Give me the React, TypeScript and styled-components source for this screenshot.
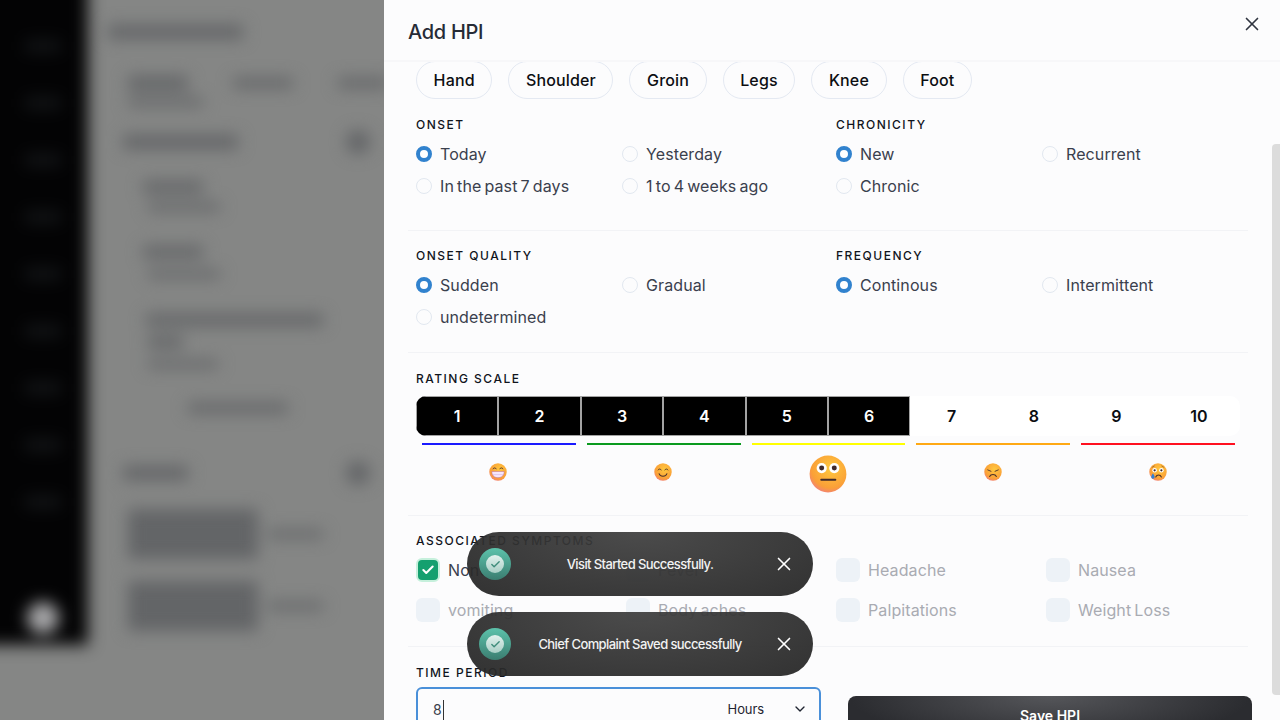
import React from 'react';
import styled, { createGlobalStyle } from 'styled-components';
import { X, ChevronDown, Check } from 'lucide-react';

const GlobalStyle = createGlobalStyle`
  html, body {
    margin: 0;
    height: 100%;
    overflow: hidden;
    background: #858685;
    font-family: 'Inter', 'Liberation Sans', sans-serif;
  }

  * {
    box-sizing: border-box;
  }
`;

// blurred page that sits behind the drawer
const Backdrop = styled.div`
  height: 720px;
  width: 384px;
  overflow: hidden;
  background: #858685;
`;

const BlurLayer = styled.div`
  display: flex;
  width: 440px;
  height: 780px;
  margin: -30px 0 0 -30px;
  filter: blur(8px);
`;

const SideBar = styled.div`
  width: 118px;
  height: 675px;
  flex-shrink: 0;
  background: #030304;
  display: flex;
  flex-direction: column;
  align-items: center;
  padding: 70px 2px 0 30px;
  gap: 45px;
`;

const SideItem = styled.div`
  width: 36px;
  height: 12px;
  background: #131517;
`;

const SideAvatar = styled.div`
  width: 32px;
  height: 32px;
  margin-top: 49px;
  border-radius: 50%;
  background: #a8a8aa;
`;

const Page = styled.div`
  flex: 1;
  padding: 55px 0 0 20px;
  display: flex;
  flex-direction: column;
`;

const GhostBar = styled.div<{ $w: number; $h?: number; $mt?: number; $ml?: number }>`
  width: ${(p) => p.$w}px;
  height: ${(p) => p.$h ?? 12}px;
  margin-top: ${(p) => p.$mt ?? 0}px;
  margin-left: ${(p) => p.$ml ?? 0}px;
  background: #636567;
  flex-shrink: 0;
`;

const GhostRow = styled.div<{ $mt: number; $ml: number; $gap?: number }>`
  display: flex;
  align-items: center;
  gap: ${(p) => p.$gap ?? 10}px;
  width: 247px;
  margin-top: ${(p) => p.$mt}px;
  margin-left: ${(p) => p.$ml}px;
  flex-shrink: 0;
`;

const GhostDot = styled.div`
  width: 24px;
  height: 24px;
  margin-left: auto;
  border-radius: 50%;
  background: #636567;
`;

const Drawer = styled.div`
  position: fixed;
  top: 0;
  left: 384px;
  right: 0;
  bottom: 0;
  background: #fcfcfd;
  display: flex;
  flex-direction: column;
  color: #1f2430;
`;

const Header = styled.div`
  height: 62px;
  flex-shrink: 0;
  display: flex;
  align-items: flex-start;
  justify-content: space-between;
  padding: 20px 17px 0 24px;
  border-bottom: 2px solid #f7f7f9;
`;

const Title = styled.h2`
  margin: 0;
  font-size: 20px;
  line-height: 24px;
  font-weight: 500;
  color: #262b36;
  letter-spacing: -0.3px;
`;

const CloseButton = styled.button`
  border: 0;
  background: none;
  padding: 0;
  margin-top: -7px;
  display: flex;
  color: #2f3440;
`;

const Body = styled.div`
  flex: 1;
  overflow: hidden;
  padding: 0 32px 0 24px;
`;

const ChipRow = styled.div`
  display: flex;
  gap: 16px;
  padding-left: 8px;
  height: 37px;
  margin-top: -1px;
`;

const Chip = styled.div`
  height: 38px;
  padding: 0 16.6px;
  display: flex;
  align-items: center;
  border: 1.5px solid #e4e9f2;
  border-radius: 19px;
  font-size: 16px;
  font-weight: 500;
  letter-spacing: 0.15px;
  color: #0c0e12;
`;

const Section = styled.div<{ $pt: number; $h: number; $line?: boolean }>`
  height: ${(p) => p.$h}px;
  padding: ${(p) => p.$pt}px 0 0 8px;
  border-bottom: ${(p) => (p.$line ? '1px solid #f2f3f6' : '0')};
`;

const Split = styled.div`
  display: grid;
  grid-template-columns: 420px 1fr;
`;

const Label = styled.div`
  font-size: 12px;
  line-height: 16px;
  font-weight: 500;
  letter-spacing: 1.5px;
  color: #10141c;
  text-transform: uppercase;
`;

const RadioGrid = styled.div`
  display: grid;
  grid-template-columns: 206px 206px;
  grid-auto-rows: 32px;
  margin-top: 5px;
`;

const RadioItem = styled.div`
  display: flex;
  align-items: center;
  gap: 8px;
  font-size: 16px;
  color: #3a404d;
  letter-spacing: 0.1px;
  word-spacing: -1.5px;
`;

const RadioDot = styled.span<{ $on?: boolean }>`
  width: 16px;
  height: 16px;
  border-radius: 50%;
  background: ${(p) => (p.$on ? '#fff' : 'transparent')};
  border: ${(p) => (p.$on ? '4px solid #3182ce' : '1.5px solid #e2e8f0')};
`;

const Scale = styled.div`
  display: grid;
  grid-template-columns: repeat(10, 1fr);
  width: 824px;
  height: 40px;
  margin-top: 9px;
  background: #fff;
  border-radius: 10px;
  overflow: hidden;
`;

const ScaleCell = styled.div<{ $on: boolean }>`
  display: flex;
  align-items: center;
  justify-content: center;
  font-size: 16px;
  font-weight: 600;
  color: ${(p) => (p.$on ? '#fff' : '#0c0e12')};
  background: ${(p) => (p.$on ? '#000' : 'transparent')};
  border: ${(p) => (p.$on ? '1px solid #a3a3a3' : '0')};
`;

const Bands = styled.div`
  display: grid;
  grid-template-columns: repeat(5, 1fr);
  column-gap: 11px;
  width: 813px;
  margin: 7px 0 0 6px;
`;

const Band = styled.div`
  display: flex;
  flex-direction: column;
  align-items: center;
`;

const BandLine = styled.div<{ $color: string }>`
  width: 100%;
  height: 2px;
  background: ${(p) => p.$color};
`;

const EmojiSlot = styled.div<{ $big: boolean }>`
  height: 54px;
  padding: ${(p) => (p.$big ? 4 : 0)}px 1px 0 0;
  display: flex;
  align-items: center;
  justify-content: center;
`;

const SymptomGrid = styled.div`
  display: grid;
  grid-template-columns: repeat(4, 210px);
  grid-auto-rows: 40px;
  margin-top: 1px;
`;

const Symptom = styled.div<{ $on?: boolean }>`
  display: flex;
  align-items: center;
  gap: 8px;
  font-size: 16px;
  color: ${(p) => (p.$on ? '#3a404d' : '#a9abb2')};
  letter-spacing: 0.1px;
  word-spacing: -1.5px;
`;

const CheckBox = styled.span<{ $on?: boolean }>`
  width: 24px;
  height: 24px;
  border-radius: 6px;
  display: flex;
  align-items: center;
  justify-content: center;
  color: #fff;
  background: ${(p) => (p.$on ? '#14a06f' : '#edf2f7')};
  border: ${(p) => (p.$on ? '2px solid #c6f0dc' : '0')};
`;

const TimeRow = styled.div`
  display: grid;
  grid-template-columns: 405px 404px;
  column-gap: 27px;
  margin-top: 6px;
`;

const TimeInput = styled.div`
  height: 48px;
  border: 2px solid #4a90d9;
  border-radius: 6px;
  display: flex;
  align-items: flex-start;
  padding: 12px 11px 0 15px;
  font-size: 14px;
  color: #3a404d;
`;

const Caret = styled.span`
  width: 1px;
  height: 20px;
  margin: -1px 0 0 1px;
  background: #333;
`;

const Unit = styled.div`
  margin-left: auto;
  display: flex;
  align-items: center;
  gap: 28px;
  font-size: 13px;
  letter-spacing: -0.1px;
  color: #1f2430;
`;

const SaveButton = styled.button`
  height: 48px;
  margin-top: 9px;
  border: 0;
  border-radius: 8px;
  color: #fff;
  font: 600 14px 'Inter', sans-serif;
  padding: 0 0 10px;
  background: radial-gradient(ellipse at 50% 0, #55565a 0%, #2b2c30 70%);
`;

const ScrollThumb = styled.div`
  position: fixed;
  top: 144px;
  right: 0;
  width: 8px;
  height: 551px;
  background: #dcdcdc;
  border-radius: 4px 0 0 4px;
`;

const ToastStack = styled.div`
  position: fixed;
  top: 532px;
  left: 467px;
  width: 346px;
  display: flex;
  flex-direction: column;
  gap: 16px;
`;

const Toast = styled.div`
  height: 64px;
  border-radius: 32px;
  padding: 0 18px 0 12px;
  display: flex;
  align-items: center;
  color: #fff;
  background: radial-gradient(ellipse at 50% 0, rgba(62, 62, 62, 0.93) 0%, rgba(40, 40, 40, 0.94) 90%);
`;

const ToastIcon = styled.span`
  width: 32px;
  height: 32px;
  flex-shrink: 0;
  border-radius: 50%;
  display: flex;
  align-items: center;
  justify-content: center;
  background: linear-gradient(180deg, #5cc2ab 0%, #3b7d70 100%);
`;

const ToastTick = styled.span`
  width: 18px;
  height: 18px;
  border-radius: 50%;
  display: flex;
  align-items: center;
  justify-content: center;
  color: #3f8c7b;
  background: linear-gradient(180deg, #e2f2ee 0%, #a9cfc6 100%);
`;

const ToastText = styled.div`
  flex: 1;
  padding-right: 4px;
  text-align: center;
  font-size: 13px;
  font-weight: 500;
  letter-spacing: -0.6px;
  color: #f2f2f2;
`;

const ToastClose = styled.span`
  display: flex;
  color: #fff;
`;

const faceGradient = (
  <defs>
    <radialGradient id='face' cx='58%' cy='35%' r='78%'>
      <stop offset='0%' stopColor='#ffc83d' />
      <stop offset='68%' stopColor='#fa9f38' />
      <stop offset='100%' stopColor='#ee6f9c' />
    </radialGradient>
  </defs>
);

function Face ({ kind, size }: { kind: string; size: number }): React.ReactElement {
  return (
    <svg
      height={size}
      viewBox='0 0 32 32'
      width={size}
    >
      {faceGradient}
      <circle
        cx='16'
        cy='16'
        fill='url(#face)'
        r='15.5'
      />
      {kind === 'grin' && (
        <g>
          <path d='M7 11c1-3 5-3 6 0M19 11c1-3 5-3 6 0' fill='none' stroke='#4a2f2a' strokeWidth='1.6' />
          <path d='M5 15h22c0 7-4 11-11 11S5 22 5 15z' fill='#f6e6fb' stroke='#b0578f' strokeWidth='0.8' />
          <path d='M6 20.5h20' stroke='#c9a5d8' strokeWidth='0.8' />
        </g>
      )}
      {kind === 'smile' && (
        <g>
          <path d='M7 13c1-3 5-3 6 0M19 13c1-3 5-3 6 0' fill='none' stroke='#4a2f2a' strokeWidth='1.6' />
          <path d='M9 19c2 6 12 6 14 0' fill='none' stroke='#4a2f2a' strokeWidth='1.8' strokeLinecap='round' />
        </g>
      )}
      {kind === 'flat' && (
        <g>
          <circle cx='10.7' cy='11' r='4.3' fill='#fff' />
          <circle cx='21.3' cy='11' r='4.3' fill='#fff' />
          <circle cx='10.7' cy='11' r='2.1' fill='#40292a' />
          <circle cx='21.3' cy='11' r='2.1' fill='#40292a' />
          <rect x='9.5' y='20' width='13.5' height='1.7' rx='0.8' fill='#40292a' />
        </g>
      )}
      {kind === 'sad' && (
        <g>
          <path d='M6 12l7 3M26 12l-7 3' fill='none' stroke='#4a2f2a' strokeWidth='1.6' />
          <path d='M10 24c2-5 10-5 12 0' fill='none' stroke='#4a2f2a' strokeWidth='1.8' strokeLinecap='round' />
        </g>
      )}
      {kind === 'cry' && (
        <g>
          <path d='M5 8l5-3M27 8l-5-3' fill='none' stroke='#8a5a2a' strokeWidth='1.2' />
          <circle cx='10' cy='13' r='4' fill='#fff' />
          <circle cx='22' cy='13' r='4' fill='#fff' />
          <circle cx='10' cy='13' r='2' fill='#40292a' />
          <circle cx='22' cy='13' r='2' fill='#40292a' />
          <path d='M12 25c2-5 8-5 10 0' fill='none' stroke='#4a2f2a' strokeWidth='1.8' strokeLinecap='round' />
          <path d='M7 18c-2 3-3 5-3 7a3 3 0 0 0 6 0c0-2-1-4-3-7z' fill='#2f7fd8' />
        </g>
      )}
    </svg>
  );
}

const chips = ['Hand', 'Shoulder', 'Groin', 'Legs', 'Knee', 'Foot'];
const symptoms = ['None', 'Fever', 'Headache', 'Nausea', 'vomiting', 'Body aches', 'Palpitations', 'Weight Loss'];
const bands = [
  { color: '#1a1aff', kind: 'grin', size: 18 },
  { color: '#0a9a1e', kind: 'smile', size: 18 },
  { color: '#ffff00', kind: 'flat', size: 38 },
  { color: '#ffa914', kind: 'sad', size: 18 },
  { color: '#ff1020', kind: 'cry', size: 18 }
];

function RadioGroup ({ title, options, selected }: { title: string; options: string[]; selected: string }): React.ReactElement {
  return (
    <div>
      <Label>{title}</Label>
      <RadioGrid>
        {options.map((option) => (
          <RadioItem key={option}>
            <RadioDot $on={option === selected} />
            {option}
          </RadioItem>
        ))}
      </RadioGrid>
    </div>
  );
}

export default function App (): React.ReactElement {
  return (
    <>
      <GlobalStyle />
      <Backdrop>
        <BlurLayer>
          <SideBar>
            {Array.from({ length: 9 }, (_, i) => <SideItem key={i} />)}
            <SideAvatar />
          </SideBar>
          <Page>
            <GhostBar $w={135} $h={14} />
            <GhostRow $mt={37} $ml={20} $gap={45}>
              <GhostBar $w={60} $h={14} />
              <GhostBar $w={60} $h={10} />
              <GhostBar $w={50} $h={10} />
            </GhostRow>
            <GhostBar $w={75} $h={8} $mt={8} $ml={20} />
            <GhostRow $mt={24} $ml={15}>
              <GhostBar $w={115} $h={14} />
              <GhostDot />
            </GhostRow>
            <GhostBar $w={60} $h={12} $mt={27} $ml={35} />
            <GhostBar $w={72} $h={8} $mt={10} $ml={40} />
            <GhostBar $w={60} $h={12} $mt={35} $ml={35} />
            <GhostBar $w={72} $h={8} $mt={12} $ml={40} />
            <GhostBar $w={177} $h={12} $mt={36} $ml={38} />
            <GhostBar $w={35} $h={12} $mt={10} $ml={40} />
            <GhostBar $w={70} $h={8} $mt={12} $ml={40} />
            <GhostBar $w={100} $h={10} $mt={35} $ml={80} />
            <GhostRow $mt={48} $ml={15}>
              <GhostBar $w={65} $h={14} />
              <GhostDot />
            </GhostRow>
            <GhostRow $mt={24} $ml={20}>
              <GhostBar $w={130} $h={50} />
              <GhostBar $w={55} $h={8} />
            </GhostRow>
            <GhostRow $mt={22} $ml={20}>
              <GhostBar $w={130} $h={50} />
              <GhostBar $w={55} $h={8} />
            </GhostRow>
          </Page>
        </BlurLayer>
      </Backdrop>
      <Drawer>
        <Header>
          <Title>Add HPI</Title>
          <CloseButton>
            <X size={22} strokeWidth={1.8} />
          </CloseButton>
        </Header>
        <Body>
          <ChipRow>
            {chips.map((chip) => <Chip key={chip}>{chip}</Chip>)}
          </ChipRow>
          <Section $h={133} $pt={19} $line>
            <Split>
              <RadioGroup options={['Today', 'Yesterday', 'In the past 7 days', '1 to 4 weeks ago']} selected='Today' title='Onset' />
              <RadioGroup options={['New', 'Recurrent', 'Chronic']} selected='New' title='Chronicity' />
            </Split>
          </Section>
          <Section $h={122} $pt={17} $line>
            <Split>
              <RadioGroup options={['Sudden', 'Gradual', 'undetermined']} selected='Sudden' title='Onset Quality' />
              <RadioGroup options={['Continous', 'Intermittent']} selected='Continous' title='Frequency' />
            </Split>
          </Section>
          <Section $h={163} $pt={18} $line>
            <Label>Rating Scale</Label>
            <Scale>
              {Array.from({ length: 10 }, (_, i) => (
                <ScaleCell $on={i < 6} key={i}>{i + 1}</ScaleCell>
              ))}
            </Scale>
            <Bands>
              {bands.map((band) => (
                <Band key={band.color}>
                  <BandLine $color={band.color} />
                  <EmojiSlot $big={band.size > 18}>
                    <Face kind={band.kind} size={band.size} />
                  </EmojiSlot>
                </Band>
              ))}
            </Bands>
          </Section>
          <Section $h={131} $pt={17} $line>
            <Label>Associated Symptoms</Label>
            <SymptomGrid>
              {symptoms.map((symptom, i) => (
                <Symptom $on={i === 0} key={symptom}>
                  <CheckBox $on={i === 0}>
                    {i === 0 && <Check size={14} strokeWidth={3.5} />}
                  </CheckBox>
                  {symptom}
                </Symptom>
              ))}
            </SymptomGrid>
          </Section>
          <Section $h={90} $pt={18}>
            <Label>Time Period</Label>
            <TimeRow>
              <TimeInput>
                8
                <Caret />
                <Unit>
                  Hours
                  <ChevronDown size={16} strokeWidth={2} />
                </Unit>
              </TimeInput>
              <SaveButton>Save HPI</SaveButton>
            </TimeRow>
          </Section>
        </Body>
      </Drawer>
      <ScrollThumb />
      <ToastStack>
        {['Visit Started Successfully.', 'Chief Complaint Saved successfully'].map((message) => (
          <Toast key={message}>
            <ToastIcon>
              <ToastTick>
                <Check size={11} strokeWidth={3} />
              </ToastTick>
            </ToastIcon>
            <ToastText>{message}</ToastText>
            <ToastClose>
              <X size={22} strokeWidth={1.8} />
            </ToastClose>
          </Toast>
        ))}
      </ToastStack>
    </>
  );
}
